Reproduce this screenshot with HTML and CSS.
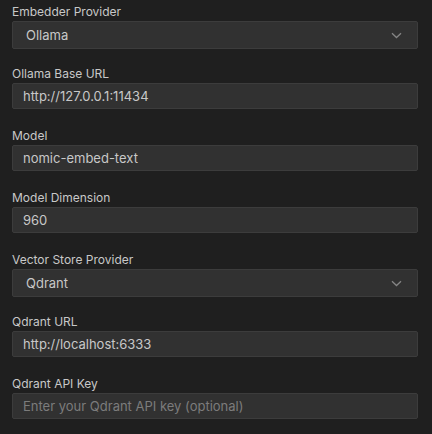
FILE: index.html
```html
<!DOCTYPE html>
<html>
<head>
<meta charset="utf-8">
<link rel="stylesheet" href="styles.css">
</head>
<body>
<div class="form">
  <div class="group group-select">
    <div class="label">Embedder Provider</div>
    <div class="box select">
      <span class="value">Ollama</span>
      <svg class="chev" width="11" height="7" viewBox="0 0 11 7"><path d="M1 1.2l4.5 4.3L10 1.2" fill="none" stroke="currentColor" stroke-width="1.3"/></svg>
    </div>
  </div>
  <div class="group group-input">
    <div class="label">Ollama Base URL</div>
    <div class="box input"><span class="value">http://127.0.0.1:11434</span></div>
  </div>
  <div class="group group-input">
    <div class="label">Model</div>
    <div class="box input"><span class="value">nomic-embed-text</span></div>
  </div>
  <div class="group group-input">
    <div class="label">Model Dimension</div>
    <div class="box input"><span class="value">960</span></div>
  </div>
  <div class="group group-select">
    <div class="label">Vector Store Provider</div>
    <div class="box select">
      <span class="value">Qdrant</span>
      <svg class="chev" width="11" height="7" viewBox="0 0 11 7"><path d="M1 1.2l4.5 4.3L10 1.2" fill="none" stroke="currentColor" stroke-width="1.3"/></svg>
    </div>
  </div>
  <div class="group group-input">
    <div class="label">Qdrant URL</div>
    <div class="box input"><span class="value">http://localhost:6333</span></div>
  </div>
  <div class="group group-input">
    <div class="label">Qdrant API Key</div>
    <div class="box input"><span class="placeholder">Enter your Qdrant API key (optional)</span></div>
  </div>
</div>
</body>
</html>
```
FILE: styles.css
```css
html, body {
  margin: 0;
  padding: 0;
  background: #1f1f1f;
}
body {
  font-family: Inter, "Noto Sans", sans-serif;
  color: #c8c8c8;
  width: 432px;
  height: 434px;
  overflow: hidden;
}
.form {
  display: flex;
  flex-direction: column;
  padding: 3px 14px 0 12px;
}
.label {
  font-size: 12px;
  line-height: 18px;
  color: #c8c8c8;
}
.box {
  box-sizing: border-box;
  display: flex;
  align-items: center;
  background: #313131;
  border: 1px solid #3c3c3c;
  border-radius: 2px;
  font-size: 13px;
}
.group-select { margin-bottom: 16px; }
.group-input { margin-bottom: 18px; }
.select {
  height: 28px;
  padding: 0 15px 0 13px;
  justify-content: space-between;
}
.input {
  height: 26px;
  padding: 0 9px 0 10px;
}
.chev {
  color: #858585;
}
.placeholder {
  color: #7c7c7c;
}
```
